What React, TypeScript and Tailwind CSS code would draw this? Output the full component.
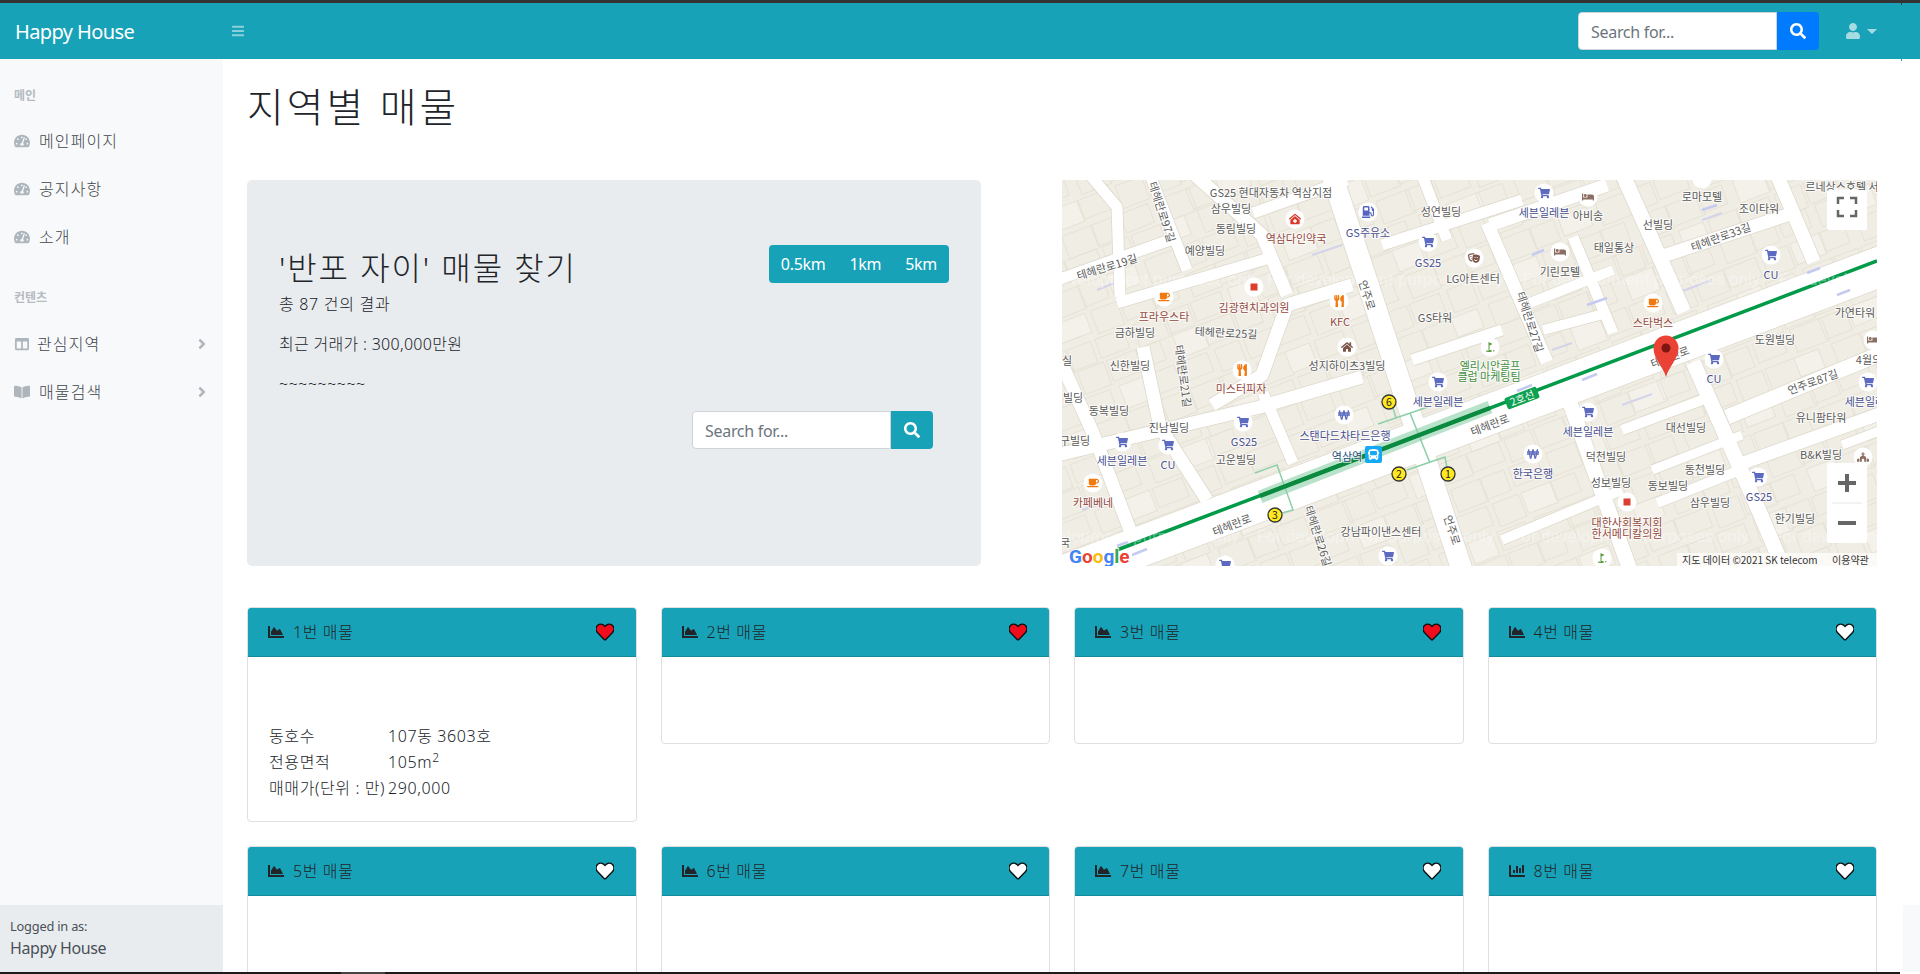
import React from "react";
import {
  FaBars, FaSearch, FaUser, FaTachometerAlt, FaColumns, FaBookOpen, FaAngleRight, FaChartArea, FaChartBar, FaHeart,
  FaShoppingCart, FaUtensils, FaCoffee, FaBed, FaHome, FaWonSign, FaGasPump, FaTheaterMasks, FaChurch, FaClinicMedical, FaBus,
} from "react-icons/fa";
import { MdGolfCourse } from "react-icons/md";

const GREY = "#5a5a5a", BLUE = "#48508f", BROWN = "#93493d", GREEN = "#3f8f3f";
type L = [string, number, number, string?, number?];
const labels: L[] = [
  ["GS25 현대자동차 역삼지점", 209, 13], ["삼우빌딩", 169, 29], ["동림빌딩", 174, 49], ["역삼다인약국", 234, 59, BROWN], ["예양빌딩", 143, 71],
  ["GS주유소", 306, 53, BLUE], ["성연빌딩", 379, 32], ["GS25", 366, 83, BLUE], ["LG아트센터", 411, 99], ["김광현치과의원", 192, 128, BROWN],
  ["프라우스타", 102, 137, BROWN], ["금하빌딩", 73, 153], ["KFC", 278, 142, BROWN], ["GS타워", 373, 138], ["성지하이츠3빌딩", 285, 186],
  ["엘리시안골프", 428, 186, GREEN], ["클럽 마케팅팀", 427, 197, GREEN], ["신한빌딩", 68, 186], ["미스터피자", 179, 209, BROWN], ["세븐일레븐", 376, 222, BLUE],
  ["동복빌딩", 47, 231], ["스탠다드차타드은행", 283, 256, BLUE], ["진남빌딩", 107, 248], ["GS25", 182, 262, BLUE], ["고운빌딩", 174, 280], ["CU", 106, 285, BLUE],
  ["세븐일레븐", 60, 281, BLUE], ["구빌딩", 13, 261], ["빌딩", 11, 218], ["실", 5, 181], ["역삼역", 285, 277, "#1d4f7a"], ["카페베네", 31, 323, BROWN],
  ["강남파이낸스센터", 319, 352], ["국", 3, 363],
  ["세븐일레븐", 482, 33, BLUE], ["아비송", 526, 36], ["로마모텔", 640, 17], ["조이타워", 697, 29], ["선빌딩", 596, 45], ["태일통상", 552, 68], ["CU", 709, 95, BLUE],
  ["기린모텔", 498, 92], ["스타벅스", 591, 143, BROWN], ["가연타워", 793, 133], ["도원빌딩", 713, 160], ["4월의", 807, 180], ["CU", 652, 199, BLUE], ["세븐일레븐", 808, 222, BLUE],
  ["유니팜타워", 759, 238], ["세븐일레븐", 526, 252, BLUE], ["대선빌딩", 624, 248], ["덕천빌딩", 544, 277], ["B&K빌딩", 759, 275], ["한국은행", 471, 294, BLUE],
  ["동천빌딩", 643, 290], ["성보빌딩", 549, 303], ["동보빌딩", 606, 306], ["GS25", 697, 317, BLUE], ["삼우빌딩", 648, 323], ["한기빌딩", 733, 339],
  ["대한사회복지회", 565, 343, BROWN], ["한서메디칼의원", 565, 354, BROWN], ["르네상스호텔 서", 780, 7],
  ["테헤란로19길", 45, 87, GREY, -17], ["테헤란로25길", 164, 153, GREY, 3], ["테헤란로97길", 100, 32, GREY, 72], ["테헤란로21길", 121, 196, GREY, 82], ["테헤란로26길", 256, 356, GREY, 72],
  ["테헤란로", 170, 345, GREY, -21], ["테헤란로", 428, 245, GREY, -21], ["언주로", 305, 115, GREY, 72], ["언주로", 390, 350, GREY, 72], ["테헤란로", 608, 177, GREY, -21],
  ["테헤란로33길", 659, 57, GREY, -20], ["테헤란로27길", 468, 142, GREY, 72], ["언주로87길", 751, 202, GREY, -20],
];
const roads: [string, number][] = [
  ["-10,400 825,84", 40], ["270,-5 400,390", 21], ["715,-5 752,82", 14], ["561,-5 622,132", 15], ["425,43 485,182", 13], ["511,57 551,153", 11],
  ["631,182 698,333 722,390", 15], ["508,223 568,390", 15], ["-5,100 108,60", 11], ["55,123 211,77", 11], ["191,33 285,0", 11],
  ["290,105 225,125 200,195 150,225", 13], ["-5,275 88,253 198,227 300,197", 13], ["350,180 440,150", 11], ["428,45 545,5", 13],
  ["598,77 725,35", 13], ["468,123 551,90", 10], ["481,150 545,133", 10], ["665,237 820,173", 15], ["681,283 820,233", 13], ["595,323 678,290", 10],
  ["28,-5 55,27 58,117", 11], ["88,-5 125,90", 11], ["133,-5 200,55 225,115", 13], ["-2,180 31,253 68,350", 13], ["81,167 98,247 145,320", 13],
  ["201,213 231,283", 11], ["360,-5 385,60", 11], ["320,65 460,20", 11], ["580,170 520,195", 9], ["560,250 640,220", 10], ["590,290 680,255", 9], ["780,265 820,250", 9], ["440,360 560,310", 10],
];
const pois: [number, number, React.ComponentType<any>, string][] = [
  [233, 39, FaClinicMedical, "#d93a2b"], [306, 32, FaGasPump, "#5566c0"], [366, 62, FaShoppingCart, "#5c6bc0"], [412, 78, FaTheaterMasks, "#7a5548"],
  [102, 117, FaCoffee, "#f07a10"], [277, 121, FaUtensils, "#f07a10"], [285, 167, FaHome, "#7a5548"], [428, 167, MdGolfCourse, "#5a9a3a"], [180, 190, FaUtensils, "#f07a10"],
  [376, 202, FaShoppingCart, "#5c6bc0"], [282, 235, FaWonSign, "#5c6bc0"], [181, 242, FaShoppingCart, "#5c6bc0"], [60, 262, FaShoppingCart, "#5c6bc0"], [106, 265, FaShoppingCart, "#5c6bc0"],
  [31, 303, FaCoffee, "#f07a10"], [326, 376, FaShoppingCart, "#5c6bc0"], [163, 385, FaShoppingCart, "#5c6bc0"],
  [482, 13, FaShoppingCart, "#5c6bc0"], [526, 17, FaBed, "#8d6e63"], [709, 75, FaShoppingCart, "#5c6bc0"], [498, 72, FaBed, "#8d6e63"], [591, 123, FaCoffee, "#f07a10"],
  [652, 179, FaShoppingCart, "#5c6bc0"], [806, 202, FaShoppingCart, "#5c6bc0"], [526, 232, FaShoppingCart, "#5c6bc0"], [471, 274, FaWonSign, "#5c6bc0"], [696, 297, FaShoppingCart, "#5c6bc0"],
  [801, 277, FaChurch, "#8d6e63"], [540, 378, MdGolfCourse, "#5a9a3a"], [811, 160, FaBed, "#8d6e63"],
];
const exits = ["316,244 366,227", "330,225 334,238", "348,233 368,283", "345,290 383,277 386,293", "193,293 215,285 231,330 213,335"];
const stops: [number, number, string][] = [[327, 222, "6"], [337, 294, "2"], [386, 294, "1"], [213, 335, "3"]];
const cells: [number, number][] = [];
for (let a = -8; a < 32; a++) for (let b = -6; b < 26; b++) cells.push([a * 34, b * 27]);

function MapView() {
  return (
    <svg viewBox="0 0 815 386" className="block w-full h-full font-normal font-['Noto_Sans_CJK_KR','Noto_Sans',sans-serif]">
      <rect width="815" height="386" fill="#f0ede5" />
      <g transform="rotate(-21 400 190)" fill="none" stroke="#e6e2d6" strokeWidth="1">
        {cells.map(([x, y], i) => (
          <rect key={i} x={x + (i % 3) * 3} y={y + (i % 4)} width={26 + (i % 5) * 2} height={20 + (i % 3) * 2} fill={i % 7 === 0 ? "#f4f1ea" : "none"} />
        ))}
      </g>
      {[["35,110 60,100"], ["250,75 280,65"], ["490,170 510,163"], ["560,225 590,214"], ["20,330 50,320"], ["610,115 650,100"], ["725,130 745,122"], ["640,40 660,33"]].map(([p], i) => (
        <polyline key={i} points={p} stroke="#d3d4ea" strokeWidth="2" fill="none" />
      ))}
      {roads.map(([p, w], i) => (
        <polyline key={i} points={p} fill="none" stroke="#ddd8ca" strokeWidth={w + 1.5} strokeLinejoin="round" />
      ))}
      {roads.map(([p, w], i) => (
        <polyline key={i} points={p} fill="none" stroke="#ffffff" strokeWidth={w} strokeLinejoin="round" />
      ))}
      {[["520,200 535,194"], ["545,118 525,125"], ["758,88 745,93"], ["788,110 775,115"], ["470,205 455,211"], ["655,25 640,30"], ["482,70 470,75"], ["66,362 55,366"], ["70,375 85,369"]].map(([p], i) => (
        <polyline key={i} points={p} stroke="#c5caf0" strokeWidth="2.5" fill="none" />
      ))}
      <line x1="198" y1="317" x2="428" y2="227" stroke="#8ccfa8" strokeWidth="13" opacity="0.6" />
      {exits.map((p, i) => <polyline key={i} points={p} fill="none" stroke="#8ccfa8" strokeWidth="1.5" />)}
      <line x1="55" y1="370" x2="815" y2="81" stroke="#009a49" strokeWidth="3.5" />
      <line x1="198" y1="316" x2="428" y2="228" stroke="#0a8a3e" strokeWidth="4.5" />
      <g transform="rotate(-21 460 218)">
        <rect x="443" y="212" width="34" height="12" rx="2" fill="#0ea152" />
        <text x="460" y="222" fontSize="10.5" fill="#fff" textAnchor="middle">2호선</text>
      </g>
      {[[-40, 105], [205, 105], [461, 105], [717, 105], [195, 362], [450, 362], [711, 362], [-60, 362]].map(([x, y], i) => (
        <text key={i} x={x} y={y} fontSize="17" fill="#ffffff" opacity="0.35" className="font-['Roboto',sans-serif]">For development purposes only</text>
      ))}
      {pois.map(([x, y, I, c], i) => (
        <g key={i}>
          <circle cx={x} cy={y} r="9.5" fill="#ffffff" />
          <I x={x - 6} y={y - 6} size={12} color={c} />
        </g>
      ))}
      <circle cx="192" cy="107" r="9.5" fill="#fff" />
      <rect x="188.5" y="103.5" width="7" height="7" fill="#dc3f30" />
      <circle cx="565" cy="322" r="9.5" fill="#fff" />
      <rect x="561.5" y="318.5" width="7" height="7" fill="#dc3f30" />
      <circle cx="640" cy="-1" r="9.5" fill="#fff" />
      {stops.map(([x, y, t]) => (
        <g key={t}>
          <circle cx={x} cy={y} r="7" fill="#ffe81f" stroke="#333" strokeWidth="1.3" />
          <text x={x} y={y + 4} fontSize="10.5" fill="#222" textAnchor="middle">{t}</text>
        </g>
      ))}
      <rect x="303" y="266" width="17" height="17" rx="2" fill="#14a8f5" />
      <FaBus x={306} y={269} size={11} color="#ffffff" />
      {labels.map(([t, x, y, c, r], i) => (
        <text key={i} x={x} y={y + 4} fontSize="11" fill={c ?? GREY} textAnchor="middle" stroke="#ffffff" strokeWidth="2" strokeOpacity="0.75" paintOrder="stroke" transform={r ? `rotate(${r} ${x} ${y})` : undefined}>{t}</text>
      ))}
      <path d="M604 197 C601 186 591.500 179 591.500 168 A12.500 12.500 0 0 1 616.500 168 C616.500 179 607 186 604 197 Z" fill="#ea4335" />
      <circle cx="604" cy="168" r="4.500" fill="#7d1510" />
      <text x="7" y="383" fontSize="19" fontWeight="700" stroke="#fff" strokeWidth="1.500" paintOrder="stroke" className="font-['Roboto',sans-serif]">
        <tspan fill="#4285f4">G</tspan><tspan fill="#ea4335">o</tspan><tspan fill="#fbbc05">o</tspan><tspan fill="#4285f4">g</tspan><tspan fill="#34a853">l</tspan><tspan fill="#ea4335">e</tspan>
      </text>
      <rect x="615" y="373" width="200" height="13" fill="#ffffff" opacity="0.7" />
      <text x="620" y="383.500" fontSize="10" fill="#333">지도 데이터 ©2021 SK telecom</text>
      <text x="770" y="383.500" fontSize="10" fill="#333">이용약관</text>
      <rect x="765" y="10" width="40" height="40" rx="2" fill="#fff" />
      <path d="M776 24v-6h6M788 18h6v6M794 30v6h-6M782 36h-6v-6" fill="none" stroke="#666" strokeWidth="2.500" />
      <rect x="765" y="283" width="40" height="80" rx="2" fill="#fff" />
      <line x1="770" x2="800" y1="323" y2="323" stroke="#e6e6e6" />
      <path d="M785 294v18M776 303h18" stroke="#666" strokeWidth="4" />
      <path d="M776 343h18" stroke="#666" strokeWidth="4" />
    </svg>
  );
}

function SearchBox({ btn, className }: { btn: string; className?: string }) {
  return (
    <div className={`flex h-[38px] ${className ?? ""}`}>
      <div className="w-[199px] h-full bg-white border border-[#ced4da] rounded-l-[4px] flex items-center pl-3 pt-[2px] text-[16px] font-normal tracking-[-0.3px] text-[#6c757d]">Search for...</div>
      <div className={`w-[42px] h-full rounded-r-[4px] flex items-center justify-center ${btn}`}>
        <FaSearch className="text-white w-4 h-4" />
      </div>
    </div>
  );
}

function SideItem({ icon, text, arrow, gap }: { icon: React.ReactNode; text: string; arrow?: boolean; gap?: string }) {
  return (
    <div className="h-12 flex items-center pl-[14px] pr-[14px] text-[16px] tracking-[1.1px] text-[#3f464d]">
      <span className="w-4 text-[#adb5bd] flex justify-center">{icon}</span>
      <span className={gap ?? "ml-[9px]"}>{text}</span>
      {arrow && <FaAngleRight className="ml-auto w-[14px] h-[16px] text-[#adb5bd]" />}
    </div>
  );
}

function Card({ n, liked, bar, children }: { n: number; liked?: boolean; bar?: boolean; children?: React.ReactNode }) {
  const Icon = bar ? FaChartBar : FaChartArea;
  return (
    <div className="border border-[#dfdfdf] rounded-[4px] overflow-hidden bg-white">
      <div className="h-[49px] bg-[#17a2b8] border-b border-[#148a9d] flex items-center pl-5 pr-[22px] text-[16px] text-[#212529]">
        <Icon className="w-4 h-4" />
        <span className="ml-[9px] tracking-[0.6px]">{n}번 매물</span>
        <FaHeart className="ml-auto w-[18px] h-[18px]" color={liked ? "#f00d1c" : "#ffffff"} stroke="#111111" strokeWidth="40" />
      </div>
      <div className="pt-[66px] pb-5 pl-[21px] pr-5 min-h-[86px]">{children}</div>
    </div>
  );
}

const btnGroup = ["0.5km", "1km", "5km"];

export default function App() {
  return (
    <div className="relative h-[974px] overflow-hidden flex flex-col bg-white text-[#212529] font-light font-['Noto_Sans','Noto_Sans_CJK_KR',sans-serif]">
      <div className="h-[3px] bg-[#333333] shrink-0" />
      <nav className="h-14 shrink-0 bg-[#17a2b8] flex items-center pl-[15px]">
        <span className="w-[217px] pt-[2px] text-[20px] tracking-[-0.6px] font-normal text-white leading-none">Happy House</span>
        <FaBars className="w-3 h-[14px] text-[#8bd0db]" />
        <SearchBox btn="bg-[#007bff]" className="ml-auto" />
        <div className="ml-[27px] mr-[43px] flex items-center text-[#a5dbe3]">
          <FaUser className="w-[14px] h-4" />
          <span className="ml-[7px] border-x-[5px] border-x-transparent border-t-[5px] border-t-[#a5dbe3]" />
        </div>
      </nav>
      <div className="flex-1 min-h-0 flex">
        <aside className="w-[223px] shrink-0 bg-[#f8f9fa] flex flex-col">
          <div className="flex-1">
            <div className="pl-[14px] pt-[29px] pb-[13px] h-[58px] text-[12px] font-bold text-[#b5bbc1] leading-4">메인</div>
            <SideItem icon={<FaTachometerAlt className="w-4 h-4" />} text="메인페이지" />
            <SideItem icon={<FaTachometerAlt className="w-4 h-4" />} text="공지사항" />
            <SideItem icon={<FaTachometerAlt className="w-4 h-4" />} text="소개" />
            <div className="pl-[14px] pt-[29px] h-[59px] text-[12px] font-bold text-[#b5bbc1] leading-4">컨텐츠</div>
            <SideItem icon={<FaColumns className="w-[14px] h-[14px]" />} text="관심지역" arrow gap="ml-[7px]" />
            <SideItem icon={<FaBookOpen className="w-4 h-4" />} text="매물검색" arrow />
          </div>
          <div className="h-[67px] bg-[#e9ecef] pl-[10px] pt-[12px] text-[#495057] font-normal">
            <div className="text-[12.800px] leading-[19px] tracking-[-0.2px]">Logged in as:</div>
            <div className="text-[16px] leading-6 tracking-[-0.4px]">Happy House</div>
          </div>
        </aside>
        <main className="flex-1 min-w-0 overflow-hidden pl-6 pr-[43px]">
          <h1 className="pt-6 h-[121px] text-[40px] leading-12 font-light tracking-[3px]">지역별 매물</h1>
          <div className="flex justify-between h-[386px]">
            <section className="w-[734px] bg-[#e9ecef] rounded-[5px] pl-8 pr-8 pt-[65px]">
              <div className="flex justify-between items-start">
                <div className="text-[32px] leading-[48px] mt-[-1px] tracking-[1.9px]">'반포 자이' 매물 찾기</div>
                <div className="flex h-[38px] bg-[#17a2b8] rounded-[4px] text-white text-[16px] tracking-[-0.3px] font-normal items-center">
                  {btnGroup.map((b) => <span key={b} className="px-3">{b}</span>)}
                </div>
              </div>
              <p className="text-[16px] leading-6 tracking-[0.7px]">총 87 건의 결과</p>
              <p className="text-[16px] leading-6 mt-4 tracking-[0.3px]">최근 거래가 : 300,000만원</p>
              <p className="text-[16px] leading-6 mt-4 tracking-[0.5px]">~~~~~~~~~</p>
              <div className="flex justify-end pr-4 mt-[15px]">
                <SearchBox btn="bg-[#17a2b8]" />
              </div>
            </section>
            <div className="w-[815px] h-full overflow-hidden"><MapView /></div>
          </div>
          <div className="grid grid-cols-4 gap-x-6 gap-y-6 mt-[41px] items-start">
            <Card n={1} liked>
              <table className="text-[16px] leading-[26px] tracking-[0.6px]">
                <tbody>
                  <tr><td className="p-0 pr-[3px]">동호수</td><td className="p-0">107동 3603호</td></tr>
                  <tr><td className="p-0 pr-[3px]">전용면적</td><td className="p-0">105m<sup className="text-[12px]">2</sup></td></tr>
                  <tr><td className="p-0 pr-[3px]">매매가(단위 : 만)</td><td className="p-0">290,000</td></tr>
                </tbody>
              </table>
            </Card>
            <Card n={2} liked />
            <Card n={3} liked />
            <Card n={4} />
            <Card n={5} />
            <Card n={6} />
            <Card n={7} />
            <Card n={8} bar />
          </div>
        </main>
      </div>
      <div className="h-[2px] shrink-0 flex">
        <div className="w-[341px] bg-[#1b1b1b]" />
        <div className="w-[44px] bg-[#444444]" />
        <div className="flex-1 bg-[#1b1b1b]" />
        <div className="w-[20px] bg-white" />
      </div>
      <div className="absolute right-0 bottom-[2px] w-[17px] h-[67px] bg-[#f8f9fa]" />
      <div className="absolute left-[1901px] top-[3px] w-px h-[2px] bg-[#333333]" />
      <div className="absolute left-[1901px] top-[59px] w-px h-[2px] bg-[#17a2b8]" />
    </div>
  );
}
